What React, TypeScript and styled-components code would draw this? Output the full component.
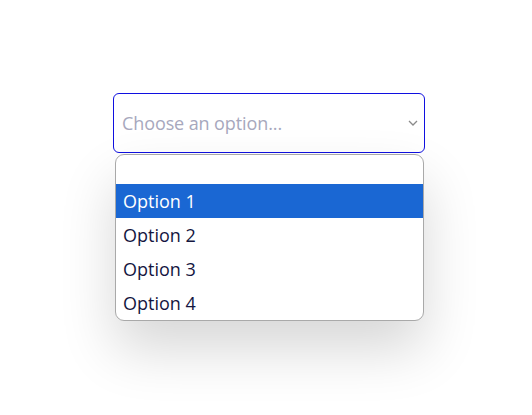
import React from "react";
import styled, { createGlobalStyle } from "styled-components";

const GlobalStyle = createGlobalStyle`
  html, body {
    margin: 0;
    padding: 0;
    background: #ffffff;
    font-family: "Open Sans", "Noto Sans", sans-serif;
  }
`;

const Page = styled.div`
  width: 532px;
  height: 415px;
  padding: 93px 0 0 113px;
  box-sizing: border-box;
  overflow: hidden;
`;

const SelectWrap = styled.div`
  position: relative;
  width: 312px;
`;

const SelectBox = styled.div`
  height: 60px;
  box-sizing: border-box;
  border: 1px solid #1010e0;
  border-radius: 6px;
  background: #ffffff;
  display: flex;
  align-items: center;
  justify-content: space-between;
  padding: 0 6px 0 8px;
`;

const Placeholder = styled.span`
  font-size: 18px;
  color: #a7a8bd;
  letter-spacing: -0.1px;
`;

const Chevron = styled.svg`
  width: 10px;
  height: 6px;
  margin-top: 0px;
`;

const List = styled.ul`
  position: absolute;
  top: 61px;
  left: 2px;
  width: 309px;
  margin: 0;
  padding: 0;
  list-style: none;
  box-sizing: border-box;
  background: #ffffff;
  border: 1px solid #a9a9a9;
  border-radius: 9px;
  overflow: hidden;
  box-shadow: 0 28px 55px rgba(0, 0, 0, 0.16);
`;

const Item = styled.li<{ $active?: boolean; $empty?: boolean }>`
  height: ${(p) => (p.$empty ? "29px" : "34px")};
  line-height: 34px;
  padding-left: 7px;
  font-size: 18px;
  color: ${(p) => (p.$active ? "#ffffff" : "#14163f")};
  background: ${(p) => (p.$active ? "#1a67d3" : "transparent")};
`;

const options = ["Option 1", "Option 2", "Option 3", "Option 4"];

export default function App() {
  return (
    <>
      <GlobalStyle />
      <Page>
        <SelectWrap>
          <SelectBox>
            <Placeholder>Choose an option...</Placeholder>
            <Chevron viewBox="0 0 10 6">
              <polyline
                points="1,1 5,5 9,1"
                fill="none"
                stroke="#8a8a8a"
                strokeWidth="1.3"
              />
            </Chevron>
          </SelectBox>
          <List>
            <Item $empty />
            {options.map((o, i) => (
              <Item key={o} $active={i === 0}>
                {o}
              </Item>
            ))}
          </List>
        </SelectWrap>
      </Page>
    </>
  );
}
